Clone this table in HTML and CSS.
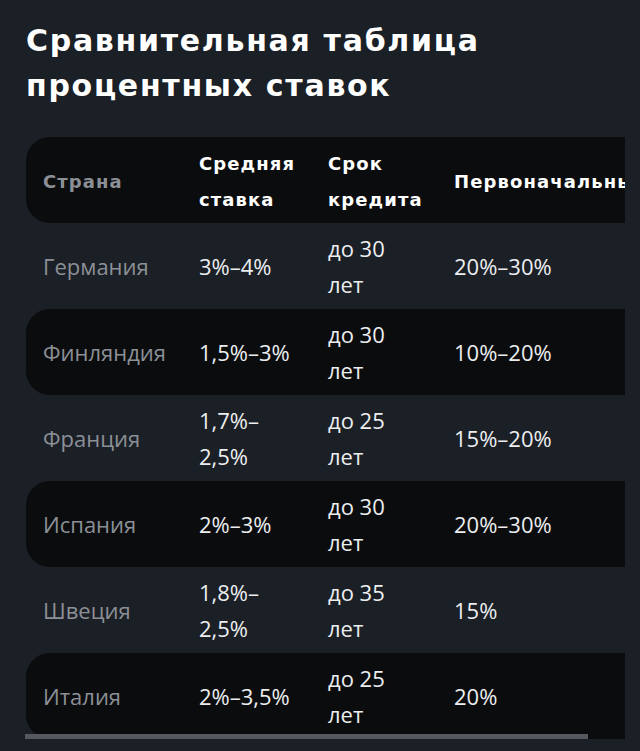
FILE: index.html
```html
<!DOCTYPE html>
<html lang="ru">
<head>
<meta charset="utf-8">
<link rel="stylesheet" href="styles.css">
</head>
<body>
<main class="page">
  <h1 class="title">Сравнительная таблица процентных ставок</h1>
  <div class="scroller">
    <table class="rates">
      <thead>
        <tr>
          <th class="c1 country-h">Страна</th>
          <th class="c2">Средняя ставка</th>
          <th class="c3">Срок кредита</th>
          <th class="c4">Первоначальный взнос</th>
        </tr>
      </thead>
      <tbody>
        <tr><td class="country">Германия</td><td>3%–4%</td><td>до 30 лет</td><td>20%–30%</td></tr>
        <tr class="dark"><td class="country">Финляндия</td><td>1,5%–3%</td><td>до 30 лет</td><td>10%–20%</td></tr>
        <tr><td class="country">Франция</td><td>1,7%–2,5%</td><td>до 25 лет</td><td>15%–20%</td></tr>
        <tr class="dark"><td class="country">Испания</td><td>2%–3%</td><td>до 30 лет</td><td>20%–30%</td></tr>
        <tr><td class="country">Швеция</td><td>1,8%–2,5%</td><td>до 35 лет</td><td>15%</td></tr>
        <tr class="dark"><td class="country">Италия</td><td>2%–3,5%</td><td>до 25 лет</td><td>20%</td></tr>
      </tbody>
    </table>
  </div>
  <div class="scrollbar"></div>
</main>
</body>
</html>
```

FILE: styles.css
```css
html, body {
  margin: 0;
  padding: 0;
  background: #1b1f26;
}
.page {
  padding: 18px 0 0 26px;
}
.title {
  margin: 0 0 29px 0;
  font-family: "DejaVu Sans", "Noto Sans", sans-serif;
  font-weight: 700;
  font-size: 30px;
  line-height: 45px;
  letter-spacing: 1.7px;
  color: #ffffff;
  width: 560px;
}
.scroller {
  width: 599px;
  overflow: hidden;
}
.scrollbar {
  position: relative;
  width: 563px;
  height: 5px;
  margin: -5px 0 0 -1px;
  background: #55595f;
}
.rates {
  border-collapse: separate;
  border-spacing: 0;
  width: 637px;
  table-layout: fixed;
}
.rates th, .rates td {
  padding: 7px 17px;
  height: 72px;
  box-sizing: content-box;
  text-align: left;
  vertical-align: middle;
}
.rates th {
  font-family: "DejaVu Sans", "Noto Sans", sans-serif;
  font-weight: 700;
  font-size: 18px;
  line-height: 36px;
  letter-spacing: 1.1px;
  color: #ffffff;
  background: #0b0c0e;
  padding-top: 9px;
  padding-bottom: 5px;
}
.rates th.c4 {
  white-space: nowrap;
  overflow: hidden;
}
.rates .c1 { width: 122px; }
.rates .c2 { width: 95px; }
.rates .c3 { width: 92px; }
.rates .c4 { width: 192px; }
.rates th.country-h {
  color: #8c9096;
  border-radius: 24px 0 0 24px;
}
.rates td {
  font-family: "Open Sans", "Noto Sans", sans-serif;
  font-size: 22px;
  line-height: 36px;
  color: #eceef0;
}
.rates td.country {
  color: #8c9096;
}
.rates tr.dark td {
  background: #0b0c0e;
}
.rates tr.dark td:first-child {
  border-radius: 24px 0 0 24px;
}
```
